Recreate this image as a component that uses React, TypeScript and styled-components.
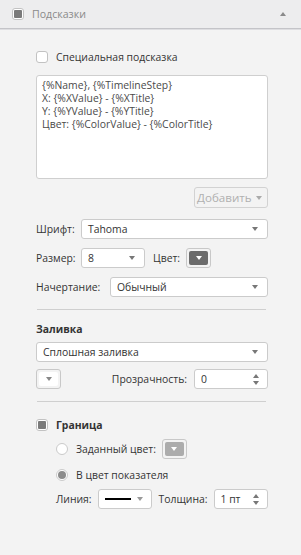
import React from 'react';
import styled, { createGlobalStyle } from 'styled-components';

const Global = createGlobalStyle`
  html, body {
    margin: 0;
    padding: 0;
    background: #f3f3f3;
  }
  body {
    font-family: 'Open Sans', 'Liberation Sans', sans-serif;
    font-size: 10.4px;
    line-height: 14px;
    color: #333;
  }
`;

const Panel = styled.div`
  width: 301px;
  height: 555px;
  background: #f3f3f3;
  overflow: hidden;
`;

const Header = styled.div`
  height: 28px;
  display: flex;
  align-items: center;
  padding: 0 12px;
  background: #ededee;
  border-bottom: 1px solid #c4c4c8;
  box-shadow: 0 1px 0 #dedee1;
  color: #8a8a8a;
  font-size: 10.6px;
`;

const HeaderTitle = styled.span`
  margin-left: 8px;
  flex: 1;
`;

const Body = styled.div`
  display: flex;
  flex-direction: column;
  padding: 21px 33px 0 36px;
`;

const Row = styled.div<{ $mt?: number; $indent?: number }>`
  display: flex;
  align-items: center;
  margin-top: ${(p) => p.$mt ?? 0}px;
  margin-left: ${(p) => p.$indent ?? 0}px;
  min-height: 14px;
`;

const Label = styled.span<{ $w?: number; $bold?: boolean }>`
  white-space: nowrap;
  width: ${(p) => (p.$w ? `${p.$w}px` : 'auto')};
  flex-shrink: 0;
  font-weight: ${(p) => (p.$bold ? 700 : 400)};
`;

const Box = styled.span<{ $checked?: boolean }>`
  width: 12px;
  height: 12px;
  box-sizing: border-box;
  border: 1px solid #c2c2c2;
  border-radius: 3px;
  background: #fff;
  flex-shrink: 0;
  margin-right: 8px;
  display: flex;
  align-items: center;
  justify-content: center;
  &::after {
    content: '';
    display: ${(p) => (p.$checked ? 'block' : 'none')};
    width: 8px;
    height: 8px;
    border-radius: 1px;
    background: #7a7a7a;
  }
`;

const Radio = styled.span<{ $checked?: boolean }>`
  width: 12px;
  height: 12px;
  box-sizing: border-box;
  border: 1px solid #cacaca;
  border-radius: 50%;
  background: #fff;
  flex-shrink: 0;
  margin-right: 8px;
  display: flex;
  align-items: center;
  justify-content: center;
  &::after {
    content: '';
    display: ${(p) => (p.$checked ? 'block' : 'none')};
    width: 8px;
    height: 8px;
    border-radius: 50%;
    background: #8c8c8c;
  }
`;

const TextArea = styled.div`
  margin-top: 11px;
  height: 104px;
  box-sizing: border-box;
  background: #fff;
  border: 1px solid #cfcfcf;
  border-radius: 3px;
  padding: 3px 5px;
  line-height: 13px;
  color: #4a4a4a;
`;

const Caret = styled.span<{ $color?: string }>`
  width: 0;
  height: 0;
  border-left: 3.5px solid transparent;
  border-right: 3.5px solid transparent;
  border-top: 4px solid ${(p) => p.$color ?? '#777'};
  flex-shrink: 0;
`;

const Select = styled.div<{ $w?: number; $ml?: number }>`
  height: 20px;
  box-sizing: border-box;
  display: flex;
  align-items: center;
  background: #fff;
  border: 1px solid #cbcbcb;
  border-radius: 3px;
  padding: 0 9px 0 6px;
  margin-left: ${(p) => p.$ml ?? 0}px;
  ${(p) => (p.$w ? `width: ${p.$w}px; flex-shrink: 0;` : 'flex: 1;')}
  & > span:first-child {
    flex: 1;
  }
`;

const AddButton = styled.div`
  align-self: flex-end;
  margin-top: 8px;
  width: 74px;
  height: 21px;
  box-sizing: border-box;
  display: flex;
  align-items: center;
  border: 1px solid #d2d2d2;
  border-radius: 3px;
  padding: 0 5px 0 2px;
  color: #b0b0b0;
  font-size: 11.6px;
  & > span:first-child {
    flex: 1;
  }
`;

const ColorButton = styled.div<{ $fill: string; $ml?: number }>`
  width: 25px;
  height: 20px;
  box-sizing: border-box;
  border: 1px solid #c8c8c8;
  border-radius: 3px;
  padding: 2px;
  flex-shrink: 0;
  margin-left: ${(p) => p.$ml ?? 0}px;
  & > div {
    height: 100%;
    border-radius: 2px;
    background: ${(p) => p.$fill};
    display: flex;
    align-items: center;
    justify-content: center;
  }
`;

const Spinner = styled(Select)`
  padding-right: 8px;
`;

const Arrows = styled.span`
  display: flex;
  flex-direction: column;
  gap: 3px;
  flex: 0 0 auto !important;
`;

const Up = styled.span`
  width: 0;
  height: 0;
  border-left: 3.5px solid transparent;
  border-right: 3.5px solid transparent;
  border-bottom: 4px solid #777;
`;

const Separator = styled.div<{ $mt: number }>`
  margin: ${(p) => p.$mt}px 2px 0 1px;
  height: 1px;
  background: #cfcfcf;
`;

const Spacer = styled.div`
  flex: 1;
`;

const LineSample = styled.span`
  display: block;
  height: 2px;
  background: #000;
  margin-right: 6px;
`;

export default function App() {
  return (
    <Panel>
      <Global />
      <Header>
        <Box $checked style={{ marginRight: 0 }} />
        <HeaderTitle>Подсказки</HeaderTitle>
        <Up style={{ borderBottomColor: '#8a8a8a', marginRight: 3 }} />
      </Header>
      <Body>
        <Row>
          <Box />
          <Label>Специальная подсказка</Label>
        </Row>
        <TextArea>
          {'{%Name}, {%TimelineStep}'}
          <br />
          {'X: {%XValue} - {%XTitle}'}
          <br />
          {'Y: {%YValue} - {%YTitle}'}
          <br />
          {'Цвет: {%ColorValue} - {%ColorTitle}'}
        </TextArea>
        <AddButton>
          <span>Добавить</span>
          <Caret $color="#aaa" />
        </AddButton>

        <Row $mt={11}>
          <Label $w={45}>Шрифт:</Label>
          <Select>
            <span>Tahoma</span>
            <Caret />
          </Select>
        </Row>
        <Row $mt={9}>
          <Label $w={45}>Размер:</Label>
          <Select $w={64}>
            <span>8</span>
            <Caret />
          </Select>
          <Label style={{ marginLeft: 8 }}>Цвет:</Label>
          <ColorButton $fill="#6b6b6b" $ml={6}>
            <div>
              <Caret $color="#fff" />
            </div>
          </ColorButton>
        </Row>
        <Row $mt={9}>
          <Label $w={74}>Начертание:</Label>
          <Select>
            <span>Обычный</span>
            <Caret />
          </Select>
        </Row>

        <Separator $mt={12} />

        <Row $mt={12}>
          <Label $bold>Заливка</Label>
        </Row>
        <Row $mt={6}>
          <Select>
            <span>Сплошная заливка</span>
            <Caret />
          </Select>
        </Row>
        <Row $mt={7}>
          <ColorButton $fill="#fff">
            <div>
              <Caret $color="#888" />
            </div>
          </ColorButton>
          <Spacer />
          <Label>Прозрачность:</Label>
          <Spinner $w={74} $ml={7}>
            <span>0</span>
            <Arrows>
              <Up />
              <Caret />
            </Arrows>
          </Spinner>
        </Row>

        <Separator $mt={12} />

        <Row $mt={16}>
          <Box $checked />
          <Label $bold>Граница</Label>
        </Row>
        <Row $mt={7} $indent={20}>
          <Radio />
          <Label>Заданный цвет:</Label>
          <ColorButton $fill="#acacac" $ml={6}>
            <div>
              <Caret $color="#fff" />
            </div>
          </ColorButton>
        </Row>
        <Row $mt={9} $indent={20}>
          <Radio $checked />
          <Label>В цвет показателя</Label>
        </Row>
        <Row $mt={7} $indent={20}>
          <Label>Линия:</Label>
          <Select $w={54} $ml={6} style={{ paddingRight: 8 }}>
            <span>
              <LineSample />
            </span>
            <Caret $color="#999" />
          </Select>
          <Label style={{ marginLeft: 7 }}>Толщина:</Label>
          <Spinner $ml={6}>
            <span>1 пт</span>
            <Arrows>
              <Up />
              <Caret />
            </Arrows>
          </Spinner>
        </Row>
      </Body>
    </Panel>
  );
}
